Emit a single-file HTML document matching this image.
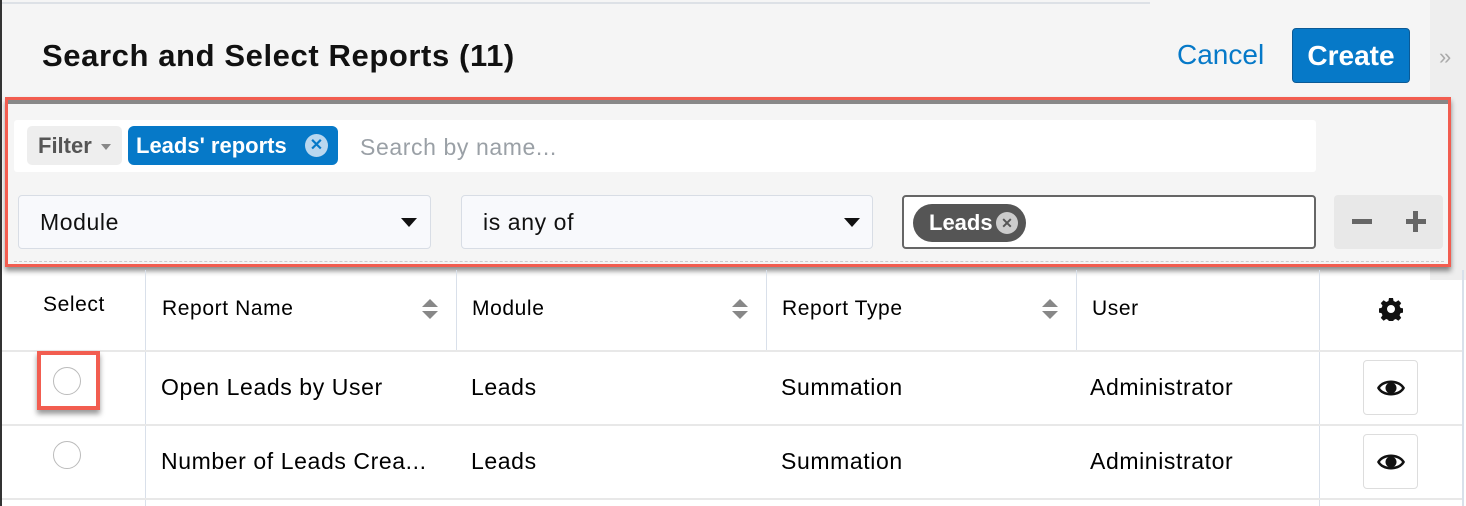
<!DOCTYPE html>
<html><head><meta charset="utf-8"><style>
*{box-sizing:border-box;margin:0;padding:0}
body{width:1466px;height:506px;overflow:hidden;background:#fff;font-family:"Liberation Sans",sans-serif;position:relative;color:#000}
.a{position:absolute}
.t{font-size:23px;white-space:nowrap;letter-spacing:0.6px}
.h{font-size:21px;letter-spacing:0.6px}
</style></head><body>
<div class="a" style="left:0;top:0;width:1466px;height:100px;background:#f5f5f5"></div>
<div class="a" style="left:0;top:2px;width:1150px;height:2px;background:#dde1e6"></div>
<div class="a" style="left:1430px;top:0;width:36px;height:280px;background:#eeeeee"></div>
<div class="a" style="left:0;top:0;width:2px;height:506px;background:#333"></div>
<div class="a" style="left:42px;top:38px;font-size:31px;font-weight:bold;letter-spacing:0.6px;color:#111">Search and Select Reports (11)</div>
<div class="a" style="left:1177px;top:39px;font-size:28px;color:#0679c8">Cancel</div>
<div class="a" style="left:1292px;top:28px;width:118px;height:55px;background:#0679c8;border:1px solid #0b5a96;border-radius:4px;color:#fff;font-size:28px;font-weight:bold;text-align:center;line-height:53px">Create</div>
<div class="a" style="left:1439px;top:44px;font-size:22px;color:#aaa">»</div>

<div class="a" style="left:5px;top:97px;width:1446px;height:170px;border:3px solid #f25d50;background:#f5f5f5;box-shadow:0 4px 5px rgba(0,0,0,.45)"></div>
<div class="a" style="left:8px;top:100px;width:1440px;height:4px;background:#888"></div>
<div class="a" style="left:14px;top:120px;width:1302px;height:52px;background:#fff;border-radius:3px"></div>
<div class="a" style="left:27px;top:126px;width:95px;height:39px;background:#eeeeee;border-radius:5px;color:#555;font-size:22px;line-height:39px;padding-left:11px;font-weight:bold">Filter <span style="display:inline-block;border-left:5px solid transparent;border-right:5px solid transparent;border-top:6px solid #888;vertical-align:middle;margin-left:3px"></span></div>
<div class="a" style="left:128px;top:126px;width:210px;height:39px;background:#0679c8;border-radius:6px;color:#fff;font-size:22px;line-height:39px;padding-left:8px;font-weight:bold">Leads' reports</div>
<div class="a" style="left:305px;top:134px;width:23px;height:23px;border-radius:50%;background:#b9d7ef;color:#0679c8;font-size:16px;font-weight:bold;text-align:center;line-height:23px">✕</div>
<div class="a t" style="left:360px;top:134px;color:#9aa0a6">Search by name...</div>

<div class="a" style="left:18px;top:195px;width:413px;height:54px;background:#f8f9fc;border:1px solid #d8dde5;border-radius:4px"></div>
<div class="a t" style="left:40px;top:209px;color:#111">Module</div>
<div class="a" style="left:401px;top:218px;border-left:8px solid transparent;border-right:8px solid transparent;border-top:9px solid #111"></div>
<div class="a" style="left:461px;top:195px;width:412px;height:54px;background:#f8f9fc;border:1px solid #d8dde5;border-radius:4px"></div>
<div class="a t" style="left:483px;top:209px;color:#111">is any of</div>
<div class="a" style="left:844px;top:218px;border-left:8px solid transparent;border-right:8px solid transparent;border-top:9px solid #111"></div>
<div class="a" style="left:902px;top:195px;width:414px;height:54px;background:#fff;border:2px solid #666;border-radius:4px"></div>
<div class="a" style="left:913px;top:204px;width:113px;height:38px;background:#555;border-radius:19px;color:#fff;font-weight:bold;font-size:22px;line-height:38px;padding-left:16px">Leads</div>
<div class="a" style="left:996px;top:212px;width:22px;height:22px;border-radius:50%;background:#ccc;color:#555;font-size:14px;font-weight:bold;text-align:center;line-height:22px">✕</div>
<div class="a" style="left:1334px;top:195px;width:109px;height:54px;background:#e8e8e8;border-radius:4px"></div>
<div class="a" style="left:1352px;top:219px;width:20px;height:5px;background:#666"></div>
<div class="a" style="left:1406px;top:219px;width:20px;height:5px;background:#666"></div>
<div class="a" style="left:1413px;top:211px;width:5px;height:21px;background:#666"></div>
<div class="a" style="left:14px;top:261px;width:1430px;border-top:1px dashed #ccc"></div>

<div class="a" style="left:145px;top:270px;width:1px;height:236px;background:#d9e0ea"></div>
<div class="a" style="left:456px;top:270px;width:1px;height:81px;background:#d9e0ea"></div>
<div class="a" style="left:766px;top:270px;width:1px;height:81px;background:#d9e0ea"></div>
<div class="a" style="left:1076px;top:270px;width:1px;height:81px;background:#d9e0ea"></div>
<div class="a" style="left:1319px;top:270px;width:1px;height:236px;background:#d9e0ea"></div>
<div class="a" style="left:1462px;top:270px;width:2px;height:236px;background:#d9e0ea"></div>
<div class="a" style="left:2px;top:350px;width:1460px;height:2px;background:#e8e8e8"></div>
<div class="a" style="left:2px;top:424px;width:1460px;height:2px;background:#e8e8e8"></div>
<div class="a" style="left:2px;top:498px;width:1460px;height:2px;background:#e8e8e8"></div>

<div class="a h" style="left:43px;top:293px">Select</div>
<div class="a h" style="left:162px;top:297px">Report Name</div>
<div class="a h" style="left:472px;top:297px">Module</div>
<div class="a h" style="left:782px;top:297px">Report Type</div>
<div class="a h" style="left:1092px;top:297px">User</div>
<svg class="a" style="left:420px;top:298px" width="20" height="22"><path d="M10 1L18 9H2Z M10 21L18 13H2Z" fill="#888"/></svg>
<svg class="a" style="left:730px;top:298px" width="20" height="22"><path d="M10 1L18 9H2Z M10 21L18 13H2Z" fill="#888"/></svg>
<svg class="a" style="left:1040px;top:298px" width="20" height="22"><path d="M10 1L18 9H2Z M10 21L18 13H2Z" fill="#888"/></svg>
<svg class="a" style="left:1379px;top:297px" width="24" height="24" viewBox="0 0 24 24"><path fill="#111" d="M10 1h4l.6 3 2.2 1 2.6-1.7 2.8 2.8-1.7 2.6 1 2.2 3 .6v4l-3 .6-1 2.2 1.7 2.6-2.8 2.8-2.6-1.7-2.2 1-.6 3h-4l-.6-3-2.2-1-2.6 1.7-2.8-2.8 1.7-2.6-1-2.2-3-.6v-4l3-.6 1-2.2L1.8 6.1 4.6 3.3l2.6 1.7 2.2-1z M12 8a4 4 0 100 8 4 4 0 000-8z" fill-rule="evenodd"/></svg>

<div class="a" style="left:37px;top:351px;width:63px;height:59px;border:4px solid #f25d50;box-shadow:0 4px 5px rgba(0,0,0,.4)"></div>
<div class="a" style="left:53px;top:367px;width:28px;height:28px;border-radius:50%;border:1px solid #bbb;background:#fff"></div>
<div class="a" style="left:53px;top:441px;width:28px;height:28px;border-radius:50%;border:1px solid #bbb;background:#fff"></div>

<div class="a t" style="left:161px;top:374px">Open Leads by User</div>
<div class="a t" style="left:471px;top:374px">Leads</div>
<div class="a t" style="left:781px;top:374px">Summation</div>
<div class="a t" style="left:1090px;top:374px">Administrator</div>
<div class="a t" style="left:161px;top:448px">Number of Leads Crea...</div>
<div class="a t" style="left:471px;top:448px">Leads</div>
<div class="a t" style="left:781px;top:448px">Summation</div>
<div class="a t" style="left:1090px;top:448px">Administrator</div>

<div class="a" style="left:1363px;top:360px;width:55px;height:55px;border:1px solid #ddd;border-radius:4px;background:#fff"></div>
<div class="a" style="left:1363px;top:434px;width:55px;height:55px;border:1px solid #ddd;border-radius:4px;background:#fff"></div>
<svg class="a" style="left:1376px;top:376px" width="30" height="24" viewBox="0 0 30 24"><path d="M1 12C6 2 24 2 29 12C24 22 6 22 1 12Z" fill="#111"/><path d="M4 12C8 5.5 22 5.5 26 12C22 18.5 8 18.5 4 12Z" fill="#fff"/><circle cx="15" cy="12" r="5.5" fill="#111"/></svg>
<svg class="a" style="left:1376px;top:450px" width="30" height="24" viewBox="0 0 30 24"><path d="M1 12C6 2 24 2 29 12C24 22 6 22 1 12Z" fill="#111"/><path d="M4 12C8 5.5 22 5.5 26 12C22 18.5 8 18.5 4 12Z" fill="#fff"/><circle cx="15" cy="12" r="5.5" fill="#111"/></svg>
</body></html>
